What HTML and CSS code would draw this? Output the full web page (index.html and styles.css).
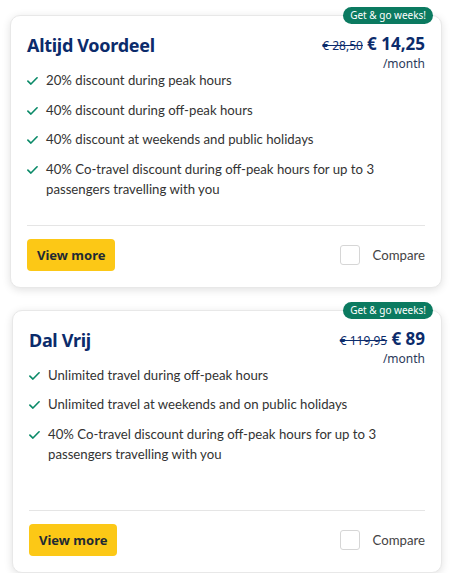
FILE: index.html
```html
<!DOCTYPE html>
<html lang="en">
<head>
<meta charset="utf-8">
<title>Subscriptions</title>
<link rel="stylesheet" href="styles.css">
</head>
<body>
<main class="list">
  <article class="card card-first">
    <span class="badge">Get &amp; go weeks!</span>
    <div class="card-body">
      <header class="card-head">
        <h2 class="title">Altijd Voordeel</h2>
        <div class="price">
          <div class="price-line"><s class="old">€ 28,50</s> <strong class="new">€ 14,25</strong></div>
          <div class="per">/month</div>
        </div>
      </header>
      <ul class="features">
        <li><svg class="check" viewBox="0 0 12 10"><path d="M1 5.2 L4.3 8.3 L11 1.5" /></svg><span>20% discount during peak hours</span></li>
        <li><svg class="check" viewBox="0 0 12 10"><path d="M1 5.2 L4.3 8.3 L11 1.5" /></svg><span>40% discount during off-peak hours</span></li>
        <li><svg class="check" viewBox="0 0 12 10"><path d="M1 5.2 L4.3 8.3 L11 1.5" /></svg><span>40% discount at weekends and public holidays</span></li>
        <li><svg class="check" viewBox="0 0 12 10"><path d="M1 5.2 L4.3 8.3 L11 1.5" /></svg><span>40% Co-travel discount during off-peak hours for up to 3 passengers travelling with you</span></li>
      </ul>
    </div>
    <footer class="card-foot">
      <button class="btn">View more</button>
      <label class="compare"><span class="box"></span><span>Compare</span></label>
    </footer>
  </article>

  <article class="card card-second">
    <span class="badge">Get &amp; go weeks!</span>
    <div class="card-body">
      <header class="card-head">
        <h2 class="title">Dal Vrij</h2>
        <div class="price">
          <div class="price-line"><s class="old">€ 119,95</s> <strong class="new">€ 89</strong></div>
          <div class="per">/month</div>
        </div>
      </header>
      <ul class="features">
        <li><svg class="check" viewBox="0 0 12 10"><path d="M1 5.2 L4.3 8.3 L11 1.5" /></svg><span>Unlimited travel during off-peak hours</span></li>
        <li><svg class="check" viewBox="0 0 12 10"><path d="M1 5.2 L4.3 8.3 L11 1.5" /></svg><span>Unlimited travel at weekends and on public holidays</span></li>
        <li><svg class="check" viewBox="0 0 12 10"><path d="M1 5.2 L4.3 8.3 L11 1.5" /></svg><span>40% Co-travel discount during off-peak hours for up to 3 passengers travelling with you</span></li>
      </ul>
    </div>
    <footer class="card-foot">
      <button class="btn">View more</button>
      <label class="compare"><span class="box"></span><span>Compare</span></label>
    </footer>
  </article>
</main>
</body>
</html>
```
FILE: styles.css
```css
* { box-sizing: border-box; }
html, body { margin: 0; padding: 0; background: #fff; }
body {
  font-family: "Noto Sans", "Open Sans", sans-serif;
  color: #333;
  width: 450px;
}
.list {
  display: flex;
  flex-direction: column;
  gap: 22px;
  padding-top: 15px;
}
.card {
  position: relative;
  background: #fff;
  border: 1px solid #e8e8e8;
  border-radius: 10px;
  box-shadow: 0 2px 8px rgba(0, 0, 0, 0.12);
  padding: 0 16px 16px 16px;
}
.card-first { margin-left: 10px; width: 432px; }
.card-second { margin-left: 12px; width: 430px; }
.card-second .card-body { min-height: 199px; }
.badge {
  position: absolute;
  top: -9px;
  right: 8px;
  background: #0b7a60;
  color: #fff;
  font-size: 10px;
  line-height: 17px;
  height: 17px;
  padding: 0 7px;
  border-radius: 9px;
}
.card-body { padding-top: 17px; padding-bottom: 26px; }
.card-head {
  display: flex;
  justify-content: space-between;
  align-items: flex-start;
}
.title {
  margin: 0;
  font-size: 18px;
  line-height: 24px;
  font-weight: 700;
  letter-spacing: -0.3px;
  color: #0b2b6b;
}
.price { text-align: right; color: #0b2b6b; }
.price-line { line-height: 22px; white-space: nowrap; }
.old { font-size: 12px; color: #0b2b6b; }
.new { font-size: 17px; font-weight: 700; }
.per { font-size: 12px; line-height: 14px; color: #2b3a5a; }
.features {
  list-style: none;
  margin: -1px 0 0 0;
  padding: 0;
  display: flex;
  flex-direction: column;
  gap: 9.5px;
}
.features li {
  display: flex;
  align-items: flex-start;
  gap: 8px;
  font-family: Lato, "Noto Sans", sans-serif;
  font-size: 13.2px;
  line-height: 20px;
  color: #333;
}
.check {
  flex: none;
  width: 11px;
  height: 10px;
  margin-top: 6px;
  fill: none;
  stroke: #0b8a68;
  stroke-width: 1.8;
  stroke-linecap: round;
  stroke-linejoin: round;
}
.card-foot {
  border-top: 1px solid #e5e5e5;
  padding-top: 13px;
  display: flex;
  justify-content: space-between;
  align-items: center;
}
.btn {
  font: inherit;
  font-size: 13px;
  font-weight: 700;
  color: #1f2a33;
  background: #fcc816;
  border: none;
  border-radius: 4px;
  height: 32px;
  padding: 0 10px;
}
.compare {
  display: flex;
  align-items: center;
  gap: 13px;
  font-family: Lato, "Noto Sans", sans-serif;
  font-size: 13.2px;
  color: #444;
}
.box {
  width: 20px;
  height: 20px;
  border: 1px solid #d6d6d6;
  border-radius: 3px;
  background: #fff;
}
```
